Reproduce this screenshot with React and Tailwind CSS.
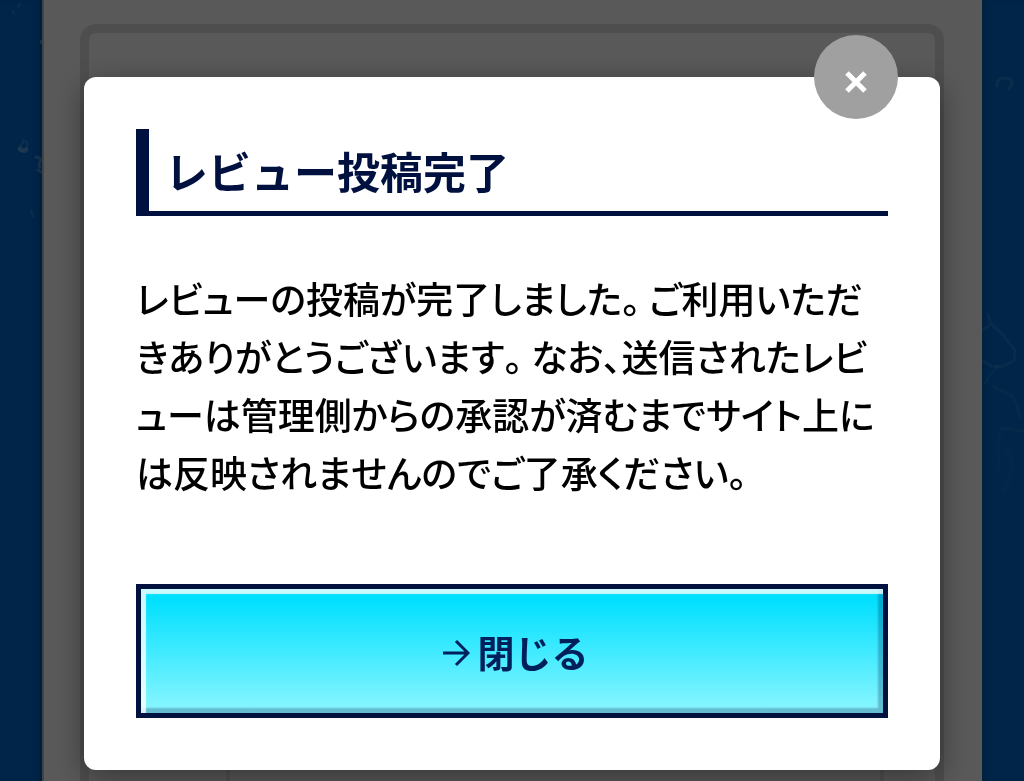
import { useState } from 'react';

const FONT = "font-['Noto_Sans_CJK_JP','Noto_Sans',sans-serif]";

export default function App() {
  const [open, setOpen] = useState(true);

  return (
    <div className={`relative h-screen overflow-hidden bg-[#006ad0] ${FONT}`}>
      <PageBackground />
      {open && <ReviewCompleteModal onClose={() => setOpen(false)} />}
    </div>
  );
}

function PageBackground() {
  return (
    <div className="flex h-full" aria-hidden="true">
      <div className="flex w-[42px] shrink-0 justify-end shadow-[inset_-6px_0_6px_-4px_#00508f]">
        <BubblesLeft />
      </div>
      <div className="flex-1 border-l-2 border-[#b4c4d6] bg-white pr-[38px] pl-9 pt-6">
        <div className="flex h-[1200px] flex-col rounded-2xl border-[9px] border-[#e0e0e0] bg-white">
          <div className="h-[736px]" />
          {/* item table under the dialog */}
          <div className="ml-[137px] mr-[51px] flex-1 border-x-4 border-[#e8e8e8]" />
        </div>
      </div>
      <div className="w-[42px] shrink-0 shadow-[inset_6px_0_6px_-4px_#005ba8]">
        <BubblesRight />
      </div>
    </div>
  );
}

function BubblesLeft() {
  return (
    <svg width="42" height="240" viewBox="0 0 42 240" fill="none" stroke="#c4e4ff" strokeLinecap="round">
      <path d="M20 4l-2 3M13 11l1 3" strokeWidth="2" opacity="0.2" />
      <path d="M23 140c1 4-4 6-4 9 2 3 7 2 8-2 1-3 0-5-2-6" strokeWidth="2" opacity="0.2" />
      <path d="M20 149c2 2 5 2 6 1" strokeWidth="5" opacity="0.35" />
      <path d="M36 157l4 1M41 160c-2 3-3 5-1 7M38 170l3 2" strokeWidth="3" opacity="0.3" />
      <path d="M41 41v2" strokeWidth="2" opacity="0.4" />
      <path d="M31 211l2 5" strokeWidth="3" opacity="0.15" />
    </svg>
  );
}

function BubblesRight() {
  return (
    <svg width="42" height="560" viewBox="0 0 42 560" fill="none" stroke="#9ad4ff" strokeLinecap="round">
      <path d="M16 81c2-4 12-4 14 1 1 3-2 5-3 7M16 81l-1 5" strokeWidth="3" opacity="0.22" />
      <path d="M6 314l3 10-8 6M10 324c3 6 10 7 12 12 2 5 8 8 11 15l-1 10-13 6-10-1-7-5" strokeWidth="3" opacity="0.16" />
      <path d="M16 366l-8 9-5 8M12 386c6 7 10 2 13 8 5 0 8 5 10 11l3 12M19 429c6-2 12 1 22 2" strokeWidth="3" opacity="0.12" />
      <path d="M18 435c-6 14 3 20-3 34M24 450c10 10 6 30-4 42" strokeWidth="4" opacity="0.05" />
    </svg>
  );
}

function ReviewCompleteModal({ onClose }) {
  return (
    <div className="fixed inset-0 bg-black/65 px-[84px] pt-[77px]">
      <div
        role="dialog"
        aria-modal="true"
        aria-labelledby="modal-title"
        className="relative rounded-xl bg-white p-[52px] shadow-[0_8px_32px_rgba(0,0,0,0.4)]"
      >
        <button
          type="button"
          aria-label="Close"
          onClick={onClose}
          className="absolute -top-[42px] right-[42px] flex size-[84px] items-center justify-center rounded-full bg-[#a0a0a0] pt-2.5"
        >
          <svg width="24" height="24" viewBox="0 0 24 24" stroke="#fff" strokeWidth="5">
            <path d="M3 3l18 18M21 3L3 21" />
          </svg>
        </button>

        <h2
          id="modal-title"
          className="border-b-[5px] border-l-[13px] border-[#00103f] pt-2 pb-2 pl-4 text-[43px] leading-[66px] font-bold text-[#00103f]"
        >
          レビュー投稿完了
        </h2>

        <p className="mt-[53px] text-[37px] leading-[58px] font-medium text-black [font-feature-settings:'palt'] [font-kerning:none]">
          レビューの投稿が完了しました。 ご利用いただきありがとうございます。 なお、送信されたレビューは管理側からの承認が済むまでサイト上には反映されませんのでご了承ください。
        </p>

        <button
          type="button"
          onClick={onClose}
          className="mt-[83px] flex h-[134px] w-full items-center justify-center gap-2 border-[5px] border-[#00103f] bg-linear-to-b/srgb from-[#00e0ff] from-8% to-[#84f5ff] to-95% pt-1 pl-1.5 text-[37px] font-bold text-[#00205c] shadow-[inset_5px_5px_1px_rgba(255,255,255,0.8),inset_-5px_-5px_2px_rgba(0,16,63,0.25)]"
        >
          <svg width="28" height="28" viewBox="0 0 28 28" fill="none" stroke="currentColor" strokeWidth="3">
            <path d="M1 14h24M14 2l12 12-12 12" />
          </svg>
          閉じる
        </button>
      </div>
    </div>
  );
}
